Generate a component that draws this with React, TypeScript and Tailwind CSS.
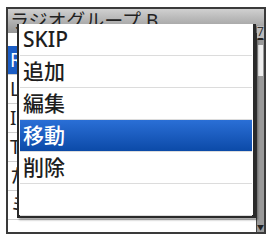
import React from "react";

const font = { fontFamily: '"Noto Sans", "Noto Sans CJK JP", sans-serif' };

export default function App() {
  const bg = ["Radio", "LIVE", "INFO", "Tokyo", "たのしい", "ミャララ"];
  const items = ["SKIP", "追加", "編集", "移動", "削除", ""];
  return (
    <div className="w-[270px] h-[237px] bg-white relative overflow-hidden" style={font}>
      <div className="absolute left-[6px] top-[7px] w-[260px] h-[227px] border-2 border-[#3a3a3a] bg-white flex flex-col">
        <div className="h-[24px] shrink-0 bg-gradient-to-b from-[#d0d0d0] to-[#959595] flex items-center pl-[2px] text-[19px] text-[#222] leading-none whitespace-nowrap">
          ラジオグループ B
        </div>
        <div className="flex flex-1 min-h-0">
          <div className="flex-1 flex flex-col pt-[13px]">
            {bg.map((t, i) => (
              <div
                key={i}
                className={`h-[29px] shrink-0 flex items-center pl-[2px] text-[19px] leading-none border-b border-[#cfcfcf] ${i === 0 ? "bg-[#1a5cc4] text-white" : "text-[#222]"}`}
              >
                {t}
              </div>
            ))}
          </div>
          <div className="w-[8px] shrink-0 bg-[#9a9a9a] border-l border-[#444] flex flex-col items-center">
            <div className="text-[7px] leading-none text-[#222] mt-[1px]">▲</div>
            <div className="mt-[4px] w-[5px] h-[31px] bg-[#eeeeee]" />
            <div className="flex-1" />
            <div className="text-[7px] leading-none text-[#222] mb-[1px]">▼</div>
          </div>
        </div>
      </div>
      <div className="absolute left-[17px] top-[24px] w-[239px] h-[194px] bg-white border-l-2 border-r-[3px] border-b-[3px] border-[#2a2a2a] shadow-[2px_2px_2px_rgba(0,0,0,0.35)] flex flex-col px-[1px]">
        {items.map((t, i) => (
          <div
            key={i}
            className={`h-[32px] shrink-0 flex items-center pl-[3px] text-[21px] font-medium leading-none border-b border-[#dcdcdc] ${i === 3 ? "bg-gradient-to-b from-[#2a6fd6] to-[#0b4aa8] text-white" : "text-[#1e1e1e]"}`}
          >
            {t}
          </div>
        ))}
      </div>
      <div className="absolute left-[257px] top-[26px] text-[12px] leading-none text-[#333] bg-[#bbbbbb]">7</div>
    </div>
  );
}
